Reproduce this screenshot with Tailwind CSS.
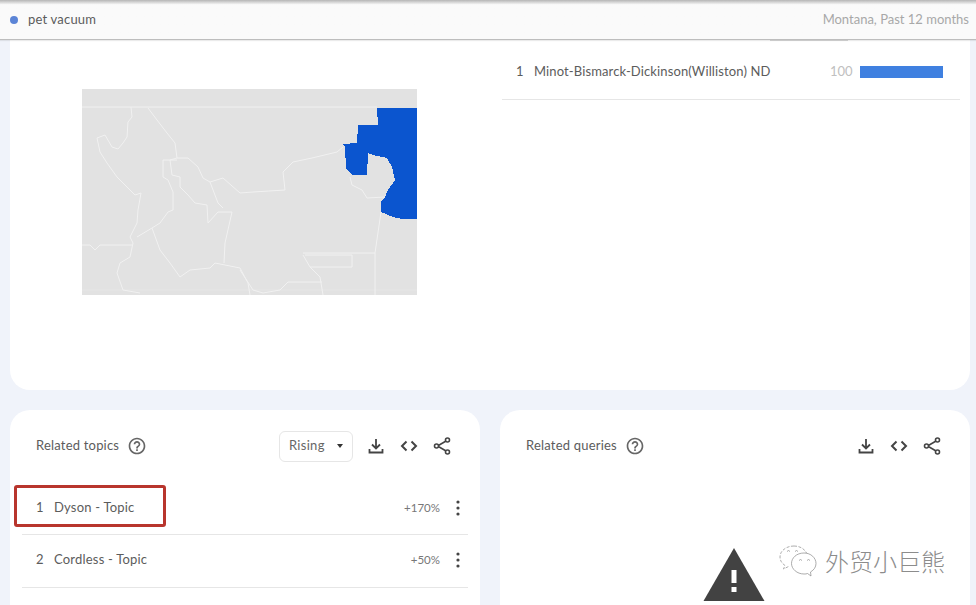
<!DOCTYPE html>
<html lang="en">
  <head>
    <meta charset="UTF-8" />
    <meta name="viewport" content="width=device-width, initial-scale=1.0" />
    <title>Interest by subregion</title>
    <script src="https://cdn.jsdelivr.net/npm/@tailwindcss/browser@4"></script>
  </head>

  <body class="relative h-[605px] overflow-hidden bg-[#f0f3fa] font-['Lato','Noto_Sans',sans-serif] text-[#5f6368]">
    <!-- sticky term bar -->
    <header class="relative z-10 flex h-10 items-center justify-between border-b border-[#bdbdbd] bg-gradient-to-b from-[#b5b5b5] via-[#fafafa] via-[12%] to-[#fafafa] pl-[10px] pr-[7px] shadow-[0_1px_1px_rgba(0,0,0,0.08)]">
      <div class="flex items-center gap-[10px]">
        <span class="h-2 w-2 rounded-full bg-[#5b84d6]"></span>
        <span class="text-[13px] tracking-[0.2px] text-[#5c5c5c]">pet vacuum</span>
      </div>
      <span class="text-[13px] text-[#a8a8a8]">Montana, Past 12 months</span>
    </header>

    <main class="pl-[10px] pr-[6px]">
      <!-- map + region list -->
      <section class="flex h-[350px] rounded-b-[20px] bg-white">
        <div class="w-[492px] pl-[72px] pt-[49px]">
          <svg class="block" width="335" height="206" viewBox="82 89 335 206">
            <rect x="82" y="89" width="335" height="206" fill="#e2e2e2" />
            <g fill="none" stroke="#f1f1f1" stroke-width="1">
              <path d="M82 107H377" />
              <path d="M82 290H417" stroke-opacity="0.4" />
              <path d="M131 107L132 117 128 122 127 137 123 143 118 149 112 147 105 135 97 138 100 152 107 163 117 177 127 187 135 195 141 193 138 210 137 223 130 237 133 243 130 257 120 263 117 273 123 290 140 293" />
              <path d="M148 108L157 120 167 133 175 143 177 158 188 158 198 167 203 178 210 182 223 178 240 193 253 192 285 190 283 172 293 162 312 158 337 152 343 147" />
              <path d="M163 160V177L168 180 173 192V210L168 212 160 223 152 228 137 237" />
              <path d="M177 158L170 160 172 175 180 177V187L188 195 195 203 207 205 208 223 218 212H232L225 243 224 263" />
              <path d="M163 160H177" />
              <path d="M210 182L218 203 223 208" />
              <path d="M152 228L160 250 170 263 180 277 190 270 210 268 215 263 225 265 240 268 248 283 250 295" />
              <path d="M82 245H90L95 250 100 245H132" />
              <path d="M350 177L352 185 362 190 367 198 385 197" />
              <path d="M381 212L375 253V295" />
              <path d="M303 253H375" />
              <path d="M303 255L310 267H352V255H305" />
              <path d="M310 267L320 277 323 295" />
              <path d="M322 282H288L280 290 263 293 253 290 240 270" />
            </g>
            <path fill="#0b55cf" shape-rendering="crispEdges" d="M377 108H417V219H402L393 217 381 212V202L385 197 388 190 395 180 392 167 387 158 373 155 368 153 367 175H352L346 168 345 147 342 144 357 143 358 125H378Z" />
          </svg>
        </div>

        <div class="relative flex-1">
          <div class="absolute left-[268px] top-0 h-px w-[78px] bg-[#dcdcdc]"></div>
          <div class="mr-[10px] flex h-[60px] items-center border-b border-[#e6e6e6] pl-[14px] pt-[5px] text-[13px] text-[#5c5c5c]">
            <span class="w-[18px]">1</span>
            <span class="w-[296px] tracking-[0.12px]">Minot-Bismarck-Dickinson(Williston) ND</span>
            <span class="w-[30px] text-[#c0c0c0]">100</span>
            <div class="h-3 w-[83px] bg-[#3f80e0]"></div>
          </div>
        </div>
      </section>

      <div class="mt-5 grid grid-cols-2 gap-5">
        <!-- related topics -->
        <section class="h-[195px] rounded-t-[20px] bg-white">
          <div class="flex h-[72px] items-center pl-[26px] pr-[28px]">
            <h2 class="text-[13px] tracking-[0.2px] text-[#5c5c5c]">Related topics</h2>
            <svg class="ml-[8px] text-[#666]" width="20" height="20" viewBox="0 0 24 24" fill="currentColor"><path d="M11 18h2v-2h-2v2zm1-16C6.48 2 2 6.48 2 12s4.48 10 10 10 10-4.48 10-10S17.52 2 12 2zm0 18c-4.41 0-8-3.59-8-8s3.59-8 8-8 8 3.59 8 8-3.59 8-8 8zm0-14c-2.21 0-4 1.79-4 4h2c0-1.1.9-2 2-2s2 .9 2 2c0 2-3 1.75-3 5h2c0-2.25 3-2.5 3-5 0-2.21-1.79-4-4-4z"/></svg>
            <div class="ml-auto flex h-[31px] w-[74px] items-center justify-between rounded-md border border-[#e6e6e6] pl-[9px] pr-[9px] text-[13px] tracking-[0.3px] text-[#666]">
              <span>Rising</span>
              <span class="h-0 w-0 border-x-[3.5px] border-t-[4px] border-x-transparent border-t-[#333]"></span>
            </div>
            <div class="ml-[13px] flex items-center gap-[13px] text-[#444]">
              <svg width="20" height="20" viewBox="0 0 20 20" fill="none" stroke="currentColor" stroke-width="1.8"><path d="M10 3v9M6 8.5l4 4 4-4M3.5 13v3.5h13V13"/></svg>
              <svg width="20" height="20" viewBox="0 0 20 20" fill="none" stroke="currentColor" stroke-width="2"><path d="M7.5 5.5L3 10l4.5 4.5M12.5 5.5L17 10l-4.500 4.500"/></svg>
              <svg width="20" height="20" viewBox="0 0 20 20" fill="none" stroke="currentColor" stroke-width="1.6"><path d="M14.500 4.800L5.500 10l9 5.200"/><circle cx="15.500" cy="4" r="2" fill="#fff"/><circle cx="4.500" cy="10" r="2" fill="#fff"/><circle cx="15.500" cy="16" r="2" fill="#fff"/></svg>
            </div>
          </div>

          <div class="mx-3 flex h-[53px] items-center border-b border-[#e6e6e6] pl-[14px] pr-[1px] text-[13px] text-[#5c5c5c]">
            <span class="w-[18px]">1</span>
            <span class="tracking-[0.2px]">Dyson - Topic</span>
            <span class="ml-auto text-[11.5px] text-[#777]">+170%</span>
            <svg class="ml-[9px] text-[#444]" width="18" height="18" viewBox="0 0 18 18" fill="currentColor"><circle cx="9" cy="3" r="1.600"/><circle cx="9" cy="9" r="1.600"/><circle cx="9" cy="15" r="1.600"/></svg>
          </div>
          <div class="mx-3 flex h-[53px] items-center border-b border-[#e6e6e6] pb-[2px] pl-[14px] pr-[1px] text-[13px] text-[#5c5c5c]">
            <span class="w-[18px]">2</span>
            <span class="tracking-[0.2px]">Cordless - Topic</span>
            <span class="ml-auto text-[11.5px] text-[#777]">+50%</span>
            <svg class="ml-[9px] text-[#444]" width="18" height="18" viewBox="0 0 18 18" fill="currentColor"><circle cx="9" cy="3" r="1.600"/><circle cx="9" cy="9" r="1.600"/><circle cx="9" cy="15" r="1.600"/></svg>
          </div>
        </section>

        <!-- related queries -->
        <section class="h-[195px] rounded-t-[20px] bg-white">
          <div class="flex h-[72px] items-center pl-[26px] pr-[28px]">
            <h2 class="text-[13px] tracking-[0.2px] text-[#5c5c5c]">Related queries</h2>
            <svg class="ml-[8px] text-[#666]" width="20" height="20" viewBox="0 0 24 24" fill="currentColor"><path d="M11 18h2v-2h-2v2zm1-16C6.48 2 2 6.48 2 12s4.48 10 10 10 10-4.48 10-10S17.52 2 12 2zm0 18c-4.41 0-8-3.59-8-8s3.59-8 8-8 8 3.59 8 8-3.59 8-8 8zm0-14c-2.21 0-4 1.79-4 4h2c0-1.1.9-2 2-2s2 .9 2 2c0 2-3 1.75-3 5h2c0-2.25 3-2.5 3-5 0-2.21-1.79-4-4-4z"/></svg>
            <div class="ml-auto flex items-center gap-[13px] text-[#444]">
              <svg width="20" height="20" viewBox="0 0 20 20" fill="none" stroke="currentColor" stroke-width="1.8"><path d="M10 3v9M6 8.5l4 4 4-4M3.5 13v3.5h13V13"/></svg>
              <svg width="20" height="20" viewBox="0 0 20 20" fill="none" stroke="currentColor" stroke-width="2"><path d="M7.5 5.5L3 10l4.5 4.5M12.5 5.5L17 10l-4.500 4.500"/></svg>
              <svg width="20" height="20" viewBox="0 0 20 20" fill="none" stroke="currentColor" stroke-width="1.6"><path d="M14.500 4.800L5.500 10l9 5.200"/><circle cx="15.500" cy="4" r="2" fill="#fff"/><circle cx="4.500" cy="10" r="2" fill="#fff"/><circle cx="15.500" cy="16" r="2" fill="#fff"/></svg>
            </div>
          </div>
          <div class="flex justify-center pt-[66px]">
            <svg class="-translate-x-[1px]" width="62" height="54" viewBox="0 0 62 54"><path fill="#424242" d="M31 0L61.500 53H0.500Z"/><path fill="#fff" d="M28.500 22h5v13h-5zM28.500 39h5v5h-5z"/></svg>
          </div>
        </section>
      </div>
    </main>

    <!-- annotation box -->
    <div class="absolute left-[14px] top-[485px] h-[42px] w-[152px] rounded-[3px] border-[3px] border-[#b8352d]"></div>

    <!-- watermark -->
    <div class="absolute left-[778px] top-[543px] flex items-center gap-[6px]">
      <svg width="41" height="36" viewBox="0 0 41 36" fill="#fff" stroke="#8a8a8a" stroke-width="0.7">
        <path d="M16 3C8 3 2 8 2 14c0 3.500 2 6.500 5 8.500L5.500 26l5-2.500" stroke-dasharray="3 1.500"/>
        <path d="M16 3c6 0 11 3 13 8" stroke-dasharray="3 1.500"/>
        <path d="M26 10c-7.500 0-12.500 5-12.500 10.500S19 31 26 31c1.500 0 2.500 0 3.500-.5L33 33l-.5-4c3.500-2 5.500-5 5.500-8.500C38 15 33 10 26 10z"/>
        <path d="M9 8.500l1.500-1 1.500 1M17 8.500l1.500-1 1.500 1M21 17.500l1.500-1 1.500 1M29 17.500l1.500-1 1.500 1" fill="none"/>
      </svg>
      <span class="whitespace-nowrap font-['Noto_Sans_CJK_SC',sans-serif] text-[24px] font-light leading-none text-[#8c8c8c]">外贸小巨熊</span>
    </div>
  </body>
</html>
